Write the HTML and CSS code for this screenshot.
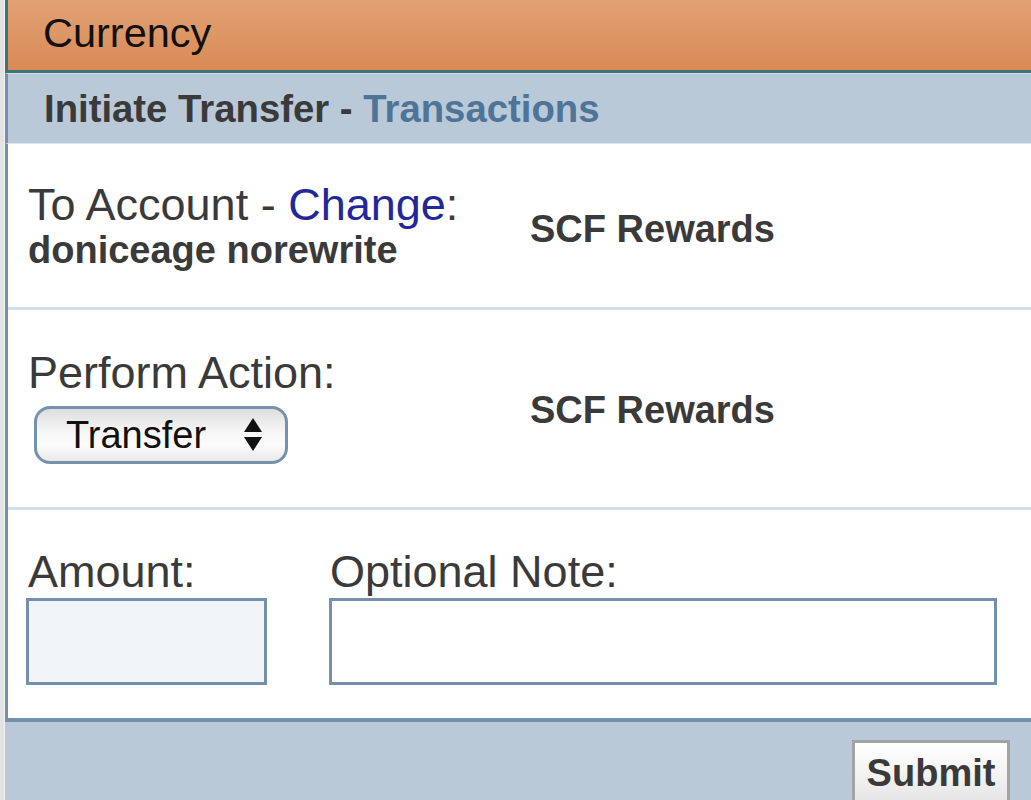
FILE: index.html
```html
<!DOCTYPE html>
<html lang="en">
<head>
<meta charset="utf-8">
<title>Currency</title>
<link rel="stylesheet" href="styles.css">
</head>
<body>
<div class="page">
  <header class="topbar">Currency</header>
  <div class="subbar"><span class="sub-title">Initiate Transfer - </span><a class="sub-link" href="#">Transactions</a></div>
  <main class="panel">
    <section class="row row-account">
      <div class="col-left">
        <div class="label">To Account - <a class="change" href="#">Change</a>:</div>
        <div class="name">doniceage norewrite</div>
      </div>
      <div class="value value-1">SCF Rewards</div>
    </section>
    <section class="row row-action">
      <div class="col-left">
        <div class="label">Perform Action:</div>
        <div class="select">
          <span class="select-text">Transfer</span>
          <svg class="select-arrows" width="18" height="34" viewBox="0 0 18 34" aria-hidden="true">
            <polygon points="9,0 18,14 0,14" fill="#111"/>
            <polygon points="0,19 18,19 9,33" fill="#111"/>
          </svg>
        </div>
      </div>
      <div class="value value-2">SCF Rewards</div>
    </section>
    <section class="row-amount">
      <div class="field">
        <div class="label">Amount:</div>
        <div class="input input-amount"></div>
      </div>
      <div class="field">
        <div class="label">Optional Note:</div>
        <div class="input input-note"></div>
      </div>
    </section>
  </main>
  <footer class="footer">
    <button class="submit" type="button">Submit</button>
  </footer>
</div>
</body>
</html>
```
FILE: styles.css
```css
html, body {
  margin: 0;
  padding: 0;
}
body {
  background: #e3e3e3;
  font-family: "Liberation Sans", Arial, sans-serif;
  color: #3a3a3a;
  overflow: hidden;
  height: 800px;
}
.page {
  margin-left: 5px;
  width: 1026px;
  min-height: 800px;
  background: #b9c9d8;
  box-shadow: -1px 0 0 #f2f2f2;
}
.topbar {
  height: 70px;
  line-height: 66px;
  padding-left: 35px;
  font-size: 41.5px;
  color: #111;
  background: linear-gradient(#e2a275, #d98a55);
  border-left: 3px solid #3e7473;
  border-bottom: 3px solid #3e7473;
}
.subbar {
  height: 69px;
  line-height: 69px;
  padding-left: 36px;
  border-left: 3px solid #7391ad;
  border-top: 1px solid #d2dde7;
  background: #b9c9d8;
  font-size: 38.3px;
  font-weight: bold;
  white-space: nowrap;
}
.sub-title {
  color: #3a3a3a;
}
.sub-link {
  color: #4e7498;
  text-decoration: none;
}
.panel {
  background: #fff;
  border-left: 3px solid #7391ad;
  border-bottom: 4px solid #7391ad;
  border-top: 1px solid #dfe7ee;
}
.row {
  display: grid;
  grid-template-columns: 502px 1fr;
  padding-left: 20px;
  border-bottom: 3px solid #d3dfe9;
}
.row-account {
  padding-top: 36px;
  padding-bottom: 37px;
}
.row-action {
  padding-top: 38px;
  padding-bottom: 43px;
}
.label {
  font-size: 45px;
  line-height: 50px;
  color: #3a3a3a;
  white-space: nowrap;
}
.change {
  color: #22279a;
  text-decoration: none;
}
.name {
  font-size: 38px;
  line-height: 40px;
  font-weight: bold;
  color: #3a3a3a;
  white-space: nowrap;
}
.value {
  font-size: 38px;
  line-height: 40px;
  font-weight: bold;
  color: #3a3a3a;
  white-space: nowrap;
}
.value-1 {
  margin-top: 29px;
}
.value-2 {
  margin-top: 42px;
}
.select {
  margin-top: 8px;
  margin-left: 6px;
  height: 52px;
  border: 3px solid #7592ad;
  border-radius: 16px;
  background: linear-gradient(#dedede, #f7f7f7 45%, #fbfbfb 70%, #e9e9e9);
  display: flex;
  align-items: center;
  justify-content: space-between;
  padding: 0 23px 0 29px;
  box-sizing: content-box;
  width: 196px;
}
.select-text {
  font-size: 38px;
  color: #111;
  line-height: 52px;
}
.select-arrows {
  display: block;
}
.row-amount {
  display: grid;
  grid-template-columns: 302px 668px;
  padding: 37px 0 33px 20px;
}
.input {
  margin-top: 1px;
  margin-left: -1px;
  height: 81px;
  border: 3px solid #7391ac;
}
.input-amount {
  margin-left: -2px;
  width: 235px;
  background: #f1f5f8;
}
.input-note {
  width: 662px;
  background: #fff;
}
.footer {
  display: flex;
  justify-content: flex-end;
  padding: 18px 21px 0 0;
}
.submit {
  height: 66px;
  padding: 0 11px;
  border: 3px solid #a3a3a3;
  border-radius: 0;
  background: linear-gradient(#ffffff, #f1f1f1 60%, #e4e4e4);
  font-family: "Liberation Sans", Arial, sans-serif;
  font-size: 38px;
  font-weight: bold;
  line-height: 60px;
  color: #3a3a3a;
  width: 158px;
}
```
